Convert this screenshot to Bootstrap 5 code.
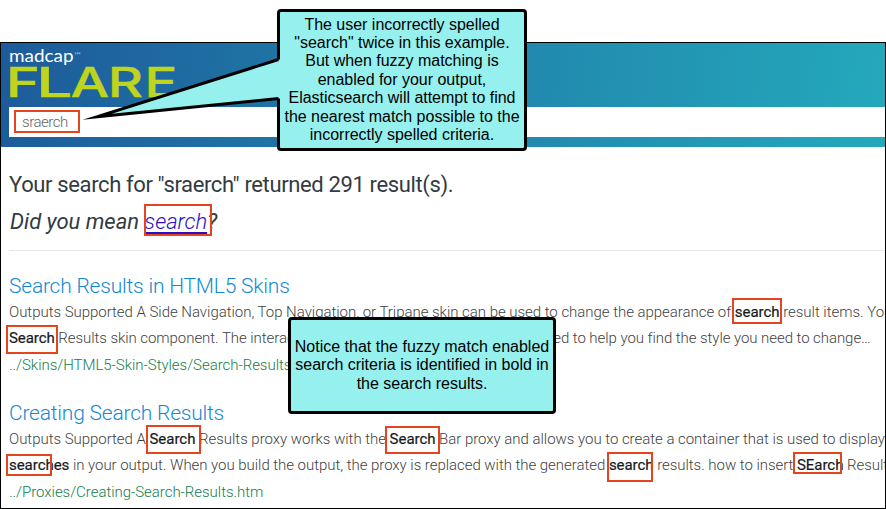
<!DOCTYPE html>
<html lang="en">
<head>
<meta charset="utf-8">
<meta name="viewport" content="width=device-width, initial-scale=1">
<title>Search results</title>
<link href="https://cdn.jsdelivr.net/npm/bootstrap@5.3.0/dist/css/bootstrap.min.css" rel="stylesheet">
<style>
body{width:886px;height:509px;background:#fff;font-family:Roboto,sans-serif;font-weight:300}
.frame{height:467px;margin-top:42px;border:1px solid #000}
.banner{height:104px;padding-left:8px;background:linear-gradient(97deg,#1d5b9a,#24a9bc)}
.brand{height:64px;display:block}
.query{height:30px;padding-left:13px;font-size:15px;line-height:30px;color:#666;letter-spacing:-.45px}
.content{padding-left:8px}
.summary{font-size:22px;font-weight:400;line-height:37px;color:#333b42;padding-top:19px}
.l1{letter-spacing:-.37px}
.suggest{font-style:italic;padding-left:1px;letter-spacing:-.03px}
.suggest a{font-weight:300;color:#2a0fc4;text-underline-offset:3px}
.rule{height:1px;background:#e6e7e8;margin-top:10px}
.entry{font-size:15px;line-height:26.3px;color:#3f3f3f}
.entry h3{font-size:21px;font-weight:300;line-height:26px;margin:0;color:#1489d2;letter-spacing:-.21px}
.entry b{font-weight:400;color:#16191c;-webkit-text-stroke:.2px #16191c}
.entry .path{color:#12804c;letter-spacing:-.04px}
.first{padding-top:22px}
.second{padding-top:22px}
.second .path{padding-top:1px}
.r1{letter-spacing:-.03px}
.r2{letter-spacing:-.06px}
.r3{letter-spacing:-.03px}
.r4{letter-spacing:-.042px}
.mk{position:absolute;border:2px solid #e6431f}
.note{position:absolute;background:#96f0ee;border:3px solid #000;border-radius:4px;font-family:"Liberation Sans",Arial,sans-serif;font-size:16px;font-weight:400;line-height:18.4px;color:#000}
.note-a{left:277px;top:9px;width:250px;height:142px;letter-spacing:-.02px}
.note-b{left:288px;top:317px;width:268px;height:97px}
.pointer{left:80px;top:50px}
.m1{left:14px;top:110px;width:66px;height:23px}
.m2{left:144px;top:204px;width:68px;height:32px}
.m3{left:6px;top:325px;width:52px;height:29px}
.m4{left:732px;top:298px;width:50px;height:26px}
.m5{left:146px;top:425px;width:55px;height:29px}
.m6{left:6px;top:454px;width:46px;height:22px}
.m7{left:385px;top:426px;width:55px;height:28px}
.m8{left:607px;top:452px;width:46px;height:30px}
.m9{left:793px;top:452px;width:49px;height:22px}
</style>
<script src="https://cdn.jsdelivr.net/npm/bootstrap@5.3.0/dist/js/bootstrap.bundle.min.js"></script>
</head>
<body class="position-relative overflow-hidden">
<div class="d-flex flex-column h-100">
<main class="frame overflow-hidden flex-shrink-0">
  <header class="banner">
    <svg class="brand" width="180" height="64" viewBox="9 43 180 64">
      <text x="9" y="62" font-family="Lato,sans-serif" font-size="16.5" font-weight="400" fill="#fff" textLength="64.5" lengthAdjust="spacingAndGlyphs">madcap</text>
      <text x="74" y="58" font-family="Lato,sans-serif" font-size="8" fill="#fff" textLength="7" lengthAdjust="spacingAndGlyphs">™</text>
      <text transform="translate(0 97) scale(1.33 1)" y="0" font-family="Inter,sans-serif" font-size="41" font-weight="500" fill="#bfd41f" stroke="#bfd41f" stroke-width=".4"><tspan x="4.6" textLength="25.6" lengthAdjust="spacingAndGlyphs">F</tspan><tspan x="27.2" textLength="27.4" lengthAdjust="spacingAndGlyphs">L</tspan><tspan x="53">A</tspan><tspan x="81">R</tspan><tspan x="108.6">E</tspan></text>
    </svg>
    <div class="query bg-white">sraerch</div>
  </header>
  <section class="content text-nowrap">
    <div class="summary">
      <div class="l1">Your search for "sraerch" returned 291 result(s).</div>
      <div class="suggest">Did you mean <a href="#">search</a>?</div>
    </div>
    <div class="rule"></div>
    <article class="entry first">
      <h3>Search Results in HTML5 Skins</h3>
      <div class="r1">Outputs Supported A Side Navigation, Top Navigation, or Tripane skin can be used to change the appearance of <b>search</b> result items. You can</div>
      <div class="r2"><b>Search</b> Results skin component. The interactive styles editor lets you see parts needed to help you find the style you need to change…</div>
      <div class="path">../Skins/HTML5-Skin-Styles/Search-Results-Styles.htm</div>
    </article>
    <article class="entry second">
      <h3>Creating Search Results</h3>
      <div class="r3">Outputs Supported A <b>Search</b> Results proxy works with the <b>Search</b> Bar proxy and allows you to create a container that is used to display</div>
      <div class="r4"><b>searches</b> in your output. When you build the output, the proxy is replaced with the generated <b>search</b> results. how to insert <b>SEarch</b> Results</div>
      <div class="path">../Proxies/Creating-Search-Results.htm</div>
    </article>
  </section>
</main>
</div>
<span class="mk m1"></span><span class="mk m2"></span><span class="mk m3"></span>
<span class="mk m4"></span><span class="mk m5"></span><span class="mk m6"></span>
<span class="mk m7"></span><span class="mk m8"></span><span class="mk m9"></span>
<aside class="note note-a d-flex align-items-center justify-content-center text-center text-nowrap">The user incorrectly spelled<br>"search" twice in this example.<br>But when fuzzy matching is<br>enabled for your output,<br>Elasticsearch will attempt to find<br>the nearest match possible to the<br>incorrectly spelled criteria.</aside>
<svg class="pointer position-absolute" width="204" height="72" viewBox="80 50 204 72"><path d="M281 59.5H278.5L97 116.8 278.5 98.5H281Z" fill="#96f0ee"/><path d="M278.5 59.5 97 116.8 278.5 98.5" fill="none" stroke="#000" stroke-width="3" stroke-miterlimit="20"/></svg>
<aside class="note note-b d-flex align-items-center justify-content-center text-center text-nowrap">Notice that the fuzzy match enabled<br>search criteria is identified in bold in<br>the search results.</aside>
</body>
</html>
